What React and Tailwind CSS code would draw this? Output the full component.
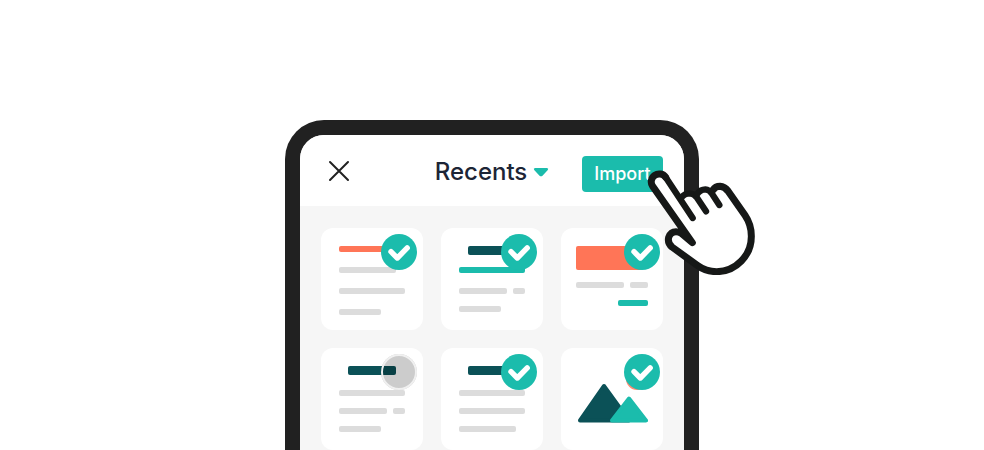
const tones = {
  gray: 'bg-[#dcdcdc]',
  coral: 'bg-[#ff7557]',
  teal: 'bg-[#1bbcac]',
  dark: 'bg-[#0b5157]',
};

function Bar({ tone = 'gray', className }) {
  return <div className={`rounded-xs ${tones[tone]} ${className}`} />;
}

function SplitLine() {
  return (
    <div className="flex gap-1.5">
      <Bar className="h-1.5 w-12" />
      <Bar className="h-1.5 w-3" />
    </div>
  );
}

function SelectMark({ name, selected = true, inset = 'right-1.5' }) {
  return (
    <span className={`absolute top-1.5 ${inset} size-9`}>
      <input
        type="checkbox"
        aria-label={`Select ${name}`}
        defaultChecked={selected}
        className="peer block size-9 appearance-none rounded-full bg-black/20 ring-2 ring-[#f0f0f0] ring-inset checked:bg-[#1bbcac] checked:ring-0"
      />
      <svg
        viewBox="0 0 36 36"
        className="pointer-events-none absolute inset-0 hidden size-9 peer-checked:block"
        fill="none"
        stroke="#fff"
        strokeWidth="5.4"
        strokeLinecap="round"
        strokeLinejoin="round"
        aria-hidden="true"
      >
        <path d="M10 17.7 L16.3 24 L26.2 13.9" />
      </svg>
    </span>
  );
}

function Card({ name, selected, inset, className = 'px-[18px]', children }) {
  return (
    <li className="relative h-[102px] rounded-xl bg-white">
      <div className={`flex flex-col items-start pt-[18px] ${className}`}>{children}</div>
      <SelectMark name={name} selected={selected} inset={inset} />
    </li>
  );
}

function Hand() {
  return (
    <svg
      viewBox="0 0 360 330"
      className="pointer-events-none absolute top-[45px] -right-[60px] h-[110px] w-[120px]"
      aria-hidden="true"
    >
      <g
        transform="translate(-207 -75)"
        fill="#fff"
        stroke="#161817"
        strokeWidth="21"
        strokeLinecap="round"
        strokeLinejoin="round"
      >
        <path
          stroke="none"
          d="M367 308 L248 139 A23 23 0 0 1 287 112 L331 177 Q345 160 360 160 L383 163 Q393 148 408 148 L427 152 Q436 139 450 139 Q464 140 474 153 L525 226 Q544 254 544 288 A106 106 0 0 1 440 395 Q408 395 382 376 L306 321 Q290 309 296 292 Q302 275 318 275 Q328 275 335 281 Z"
        />
        <path
          fill="none"
          d="M287 112 A23 23 0 0 0 248 139 L367 308 L335 281 Q328 275 318 275 Q302 275 296 292 Q292 309 306 321 L382 376 Q408 395 440 395 A106 106 0 0 0 544 288 Q544 254 525 226 L474 153 Q464 140 450 139 Q436 139 429 150"
        />
        <g fill="none" strokeWidth="19">
          <path d="M287 112 L368 234" />
          <path d="M334 173 Q343 160 359 160 Q372 161 380 172 L408 214" />
          <path d="M381 163 Q391 148 406 148 Q418 149 426 161 L448 195" />
        </g>
      </g>
    </svg>
  );
}

export default function App() {
  return (
    <main className="flex h-screen justify-center overflow-hidden bg-white pt-[120px] font-['Inter','Liberation_Sans',sans-serif]">
      <section className="relative h-fit w-full max-w-[414px] rounded-t-[39px] bg-[#212121] px-[15px] pt-[15px]">
        <div className="overflow-hidden rounded-t-3xl bg-[#f6f6f6]">
          <header className="grid h-[71px] grid-cols-[1fr_auto_1fr] items-center bg-white px-[21px]">
            <button type="button" aria-label="Close" className="ml-[7px] size-[22px]">
              <svg viewBox="0 0 22 22" className="size-[22px]" stroke="#212121" strokeWidth="2" strokeLinecap="round" aria-hidden="true">
                <path d="M2 2 L20 20 M20 2 L2 20" />
              </svg>
            </button>
            <button type="button" className="flex items-center gap-1.5 pt-0.5 text-2xl font-medium text-[#1c2536]">
              Recents
              <svg viewBox="0 0 16 10" className="h-2.5 w-4" fill="#1bbcac" aria-hidden="true">
                <path d="M2 1 H14 Q16 1.5 14.8 3 L9.5 8.7 Q8 10 6.5 8.7 L1.2 3 Q0 1.5 2 1 Z" />
              </svg>
            </button>
            <button
              type="button"
              className="mt-1.5 h-9 w-[81px] justify-self-end rounded-sm bg-[#1bbcac] text-lg font-medium text-white"
            >
              Import
            </button>
          </header>
          <ul className="grid grid-cols-3 gap-[18px] px-[21px] pt-[22px]">
            <Card name="report" className="gap-[15px] px-[18px]">
              <Bar tone="coral" className="h-1.5 w-12" />
              <Bar className="h-1.5 w-[57px]" />
              <Bar className="h-1.5 w-[66px]" />
              <Bar className="h-1.5 w-[42px]" />
            </Card>
            <Card name="letter">
              <Bar tone="dark" className="ml-[9px] h-[9px] w-12" />
              <Bar tone="teal" className="mt-3 h-1.5 w-[66px]" />
              <div className="mt-[15px] mb-3">
                <SplitLine />
              </div>
              <Bar className="h-1.5 w-[42px]" />
            </Card>
            <Card name="banner" inset="right-[3px]" className="gap-3 px-[15px]">
              <Bar tone="coral" className="h-6 w-[66px]" />
              <div className="flex gap-1.5">
                <Bar className="h-1.5 w-12" />
                <Bar className="h-1.5 w-[18px]" />
              </div>
              <Bar tone="teal" className="h-1.5 w-[30px] self-end" />
            </Card>
            <Card name="notes" selected={false} className="gap-3 px-[18px]">
              <Bar tone="dark" className="mb-[3px] ml-[9px] h-[9px] w-12" />
              <Bar className="h-1.5 w-[66px]" />
              <SplitLine />
              <Bar className="h-1.5 w-[42px]" />
            </Card>
            <Card name="article" className="gap-3 px-[18px]">
              <Bar tone="dark" className="mb-[3px] ml-[9px] h-[9px] w-12" />
              <Bar className="h-1.5 w-[66px]" />
              <Bar className="h-1.5 w-[66px]" />
              <Bar className="h-1.5 w-[57px]" />
            </Card>
            <Card name="picture" inset="right-[3px]" className="px-[15px]">
              <svg viewBox="0 0 72 60" className="h-[60px] w-[72px]" strokeWidth="4" strokeLinejoin="round" aria-hidden="true">
                <circle cx="61" cy="13" r="11" fill="#ff8a72" />
                <path d="M28 20 L53 54.5 H4 Z" fill="#0b5157" stroke="#0b5157" />
                <path d="M53 32.5 L70 54.5 H36 Z" fill="#1bbcac" stroke="#1bbcac" />
              </svg>
            </Card>
          </ul>
        </div>
        <Hand />
      </section>
    </main>
  );
}
